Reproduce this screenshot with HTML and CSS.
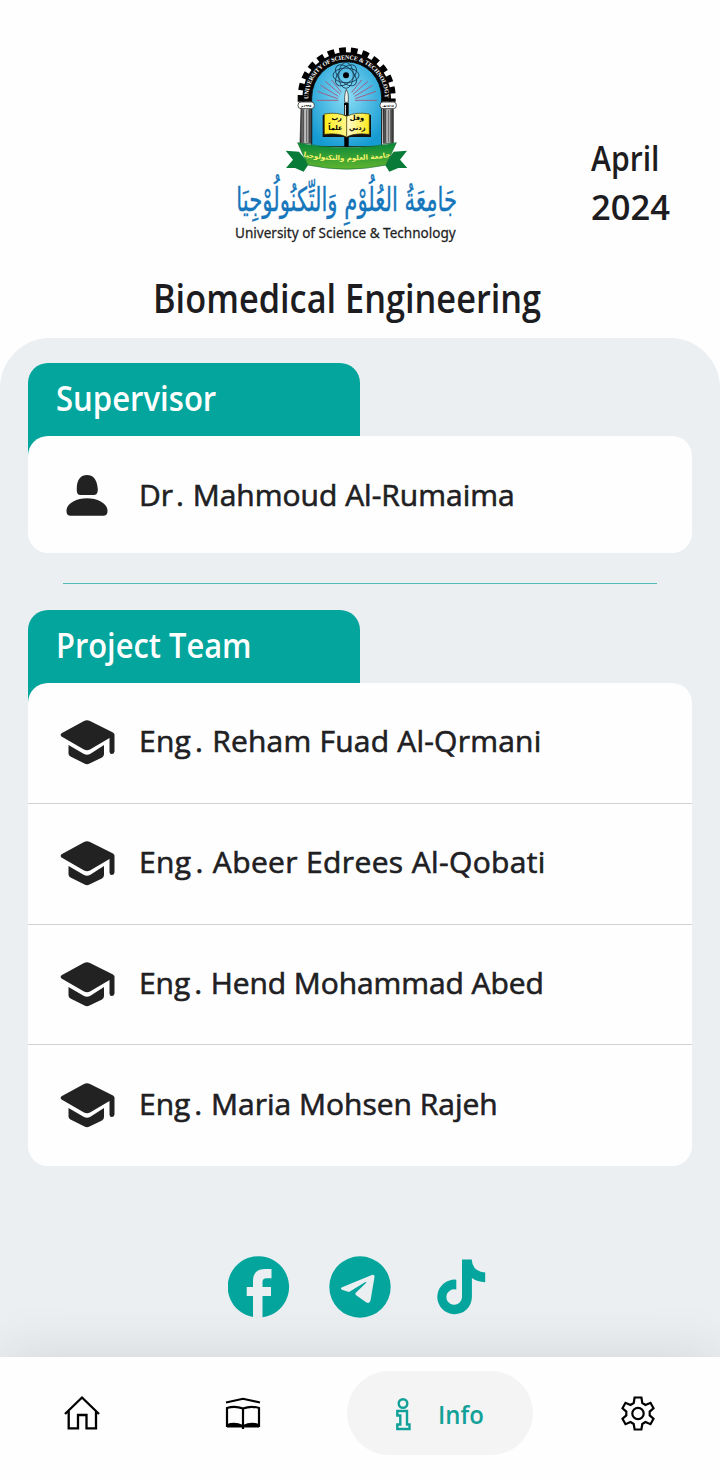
FILE: index.html
```html
<!DOCTYPE html>
<html lang="en">
<head>
<meta charset="utf-8">
<meta name="viewport" content="width=device-width">
<title>Biomedical Engineering</title>
<link rel="stylesheet" href="styles.css">
</head>
<body>
<svg class="defs" aria-hidden="true">
  <symbol id="cap" viewBox="0 0 56 48">
    <path d="M3 16 25 4Q28 2.500 31 4L54 15.500Q56 17 55.500 18V34.500Q55 37 52.800 37T50.500 34.500V21L31 32.500Q28 34 25 32.500L2.500 19.500Q.5 17.500 3 16Z"/>
    <path d="M9.500 28 25 37Q28 38.500 31 37L45 28V37Q45 39 43 40.500L30.500 46.500Q28 47.800 25.500 46.500L11.500 39.500Q9.500 38.500 9.500 36.500Z"/>
  </symbol>
</svg>
<div class="app">
  <header class="header">
    <div class="masthead">
      <svg class="logo" viewBox="0 0 735 645" role="img">
        <defs>
          <radialGradient id="sky" cx=".5" cy=".4" r=".65"><stop offset="0" stop-color="#8cddf6"/><stop offset="1" stop-color="#159bd2"/></radialGradient>
          <linearGradient id="stone"><stop offset="0" stop-color="#222"/><stop offset=".5" stop-color="#ddd"/><stop offset="1" stop-color="#222"/></linearGradient>
          <linearGradient id="gold"><stop offset="0" stop-color="#ffed18"/><stop offset=".49" stop-color="#fff68a"/><stop offset=".51" stop-color="#fffbd0"/><stop offset="1" stop-color="#ffe81a"/></linearGradient>
          <linearGradient id="ribbon" x2="0" y2="1"><stop offset="0" stop-color="#078638"/><stop offset="1" stop-color="#60b52f"/></linearGradient>
          <path id="arch" d="M250 196V188A115 115 0 0 1 480 188V196"/>
          <path id="scroll" d="M215 362Q365 390 517 362"/>
        </defs>
        <path d="M228 200V186A137 139 0 0 1 502 186V200" fill="none" stroke="#000" stroke-width="20" stroke-dasharray="20 14.700"/>
        <path d="M232 200V187A133 135 0 0 1 498 187V200Z" fill="#050505"/>
        <path d="M260 335V188A105 108 0 0 1 470 188V335Z" fill="url(#sky)" stroke="#111" stroke-width="3"/>
        <text class="arch-text"><textPath href="#arch" startOffset="4" textLength="366">UNIVERSITY OF SCIENCE &amp; TECHNOLOGY</textPath></text>
        <g fill="none" stroke="#9b628b" stroke-width="3"><path d="M275 196H340M277 169 338 191M287 151 340 184M301 139 346 178M320 135 349 172M456 196H390M453 169 391 191M443 151 389 184M429 139 384 178M410 135 380 172"/></g>
        <g fill="none" stroke="#12344c" stroke-width="2.500">
          <ellipse cx="363" cy="121" rx="39" ry="22"/><ellipse cx="363" cy="121" rx="39" ry="22" transform="rotate(45 363 121)"/><ellipse cx="363" cy="121" rx="39" ry="22" transform="rotate(90 363 121)"/><ellipse cx="363" cy="121" rx="39" ry="22" transform="rotate(135 363 121)"/>
        </g>
        <circle cx="363" cy="121" r="9"/>
        <path d="M357 204H371V335H358Z"/><path d="M361 210V240" stroke="#fff" stroke-width="3"/>
        <path d="M359 202V185Q360 171 364 163Q371 176 370 186V202Z" fill="#eef6ef" stroke="#222" stroke-width="2"/>
        <path d="M293 240V306H354Q365 310 377 306H438V240" fill="#111"/>
        <path d="M298 237Q337 230 365 244Q393 230 433 237V298Q389 293 365 306Q339 293 298 298Z" fill="url(#gold)" stroke="#3a350b" stroke-width="2"/><path d="M365 244V304" stroke="#6a621e" stroke-width="3"/>
        <g class="motto"><text x="335" y="256">رب</text><text x="331" y="284">علماً</text><text x="396" y="256">وقل</text><text x="397" y="284">زدني</text></g>
        <g fill="url(#stone)" stroke="#222" stroke-width="2"><path d="M228 220H260V325H225Z"/><path d="M474 220H505V325H475Z"/></g>
        <path d="M235 224V322M244 224V322M253 224V322M481 224V322M490 224V322M498 224V322" stroke="#222" stroke-width="2"/>
        <g fill="#fff" stroke="#333" stroke-width="2.500"><rect x="219" y="201" width="49" height="20" rx="9"/><rect x="465" y="201" width="49" height="20" rx="9"/></g>
        <g class="years"><text x="244" y="216">١٩٩٤م</text><text x="490" y="216">١٤١٤هـ</text></g>
        <path d="M182 347 222 350 252 386 236 410 210 399 183 399 204 374ZM546 347 506 350 478 386 493 410 520 399 547 399 525 374Z" fill="#087b38"/>
        <path d="M218 323Q365 352 514 323L483 390Q365 415 248 390Z" fill="url(#ribbon)" stroke="#16733a" stroke-width="2"/>
        <text class="ribbon-text"><textPath href="#scroll" startOffset="50%">جامعة العلوم والتكنولوجيا</textPath></text>
        <text class="calligraphy" transform="translate(365 528) scale(1 1.85)" textLength="662" lengthAdjust="spacingAndGlyphs">جَامِعَةُ العُلُوْمِ وَالتِّكنُولُوْجِيَا</text>
        <text class="uni" x="30" y="609" textLength="662" lengthAdjust="spacingAndGlyphs">University of Science &amp; Technology</text>
      </svg>
      <p class="date"><span class="month">April</span><span class="year">2024</span></p>
    </div>
    <h1 class="title">Biomedical Engineering</h1>
  </header>

  <main class="sheet">
    <section class="group">
      <h2 class="tab"><span class="tab-a">Supervisor</span></h2>
      <div class="card">
        <div class="row single">
          <svg class="ico" viewBox="0 0 56 48"><path d="M17.800 16C18 7 22 3 28 3S38 7 38.800 17C39 21 37.500 23 34.500 23H21.500C18.500 23 17.500 20.500 17.800 16ZM28 26.200C38 26.200 48.500 31 48.500 38.500C48.500 42.500 47 43.800 43.500 43.800H12.500C9 43.800 7.500 42.500 7.500 38.500C7.500 31 18 26.200 28 26.200Z"/></svg>
          <span class="name n0">Dr<span class="dot">.</span> Mahmoud Al-Rumaima</span>
        </div>
      </div>
    </section>
    <div class="divider"></div>
    <section class="group">
      <h2 class="tab"><span class="tab-b">Project Team</span></h2>
      <div class="card">
        <div class="row"><svg class="ico"><use href="#cap"/></svg><span class="name n1">Eng<span class="dot">.</span> Reham Fuad Al-Qrmani</span></div>
        <div class="row"><svg class="ico"><use href="#cap"/></svg><span class="name n2">Eng<span class="dot">.</span> Abeer Edrees Al-Qobati</span></div>
        <div class="row"><svg class="ico"><use href="#cap"/></svg><span class="name n3">Eng<span class="dot">.</span> Hend Mohammad Abed</span></div>
        <div class="row"><svg class="ico"><use href="#cap"/></svg><span class="name n4">Eng<span class="dot">.</span> Maria Mohsen Rajeh</span></div>
      </div>
    </section>
    <div class="social">
      <svg viewBox="0 0 62 62"><path d="M25 61.100A30.700 30.700 0 1 1 34.500 61.300V40H43V31H34.500V26Q34.500 22.300 38.500 22.300H43.500V13H37Q25 13 25 25V31H18.700V40H25Z"/></svg>
      <svg viewBox="0 0 62 62"><path fill-rule="evenodd" d="M31 .3A30.700 30.700 0 1 1 31 61.700A30.700 30.700 0 1 1 31 .3ZM43.500 18.800 13 31.200Q10.500 32.800 13.500 34L20 36 36 26.200Q38.500 25.200 36.500 27.500L26.500 37Q26 38.300 27.500 39.500L37.500 46.500Q40.500 48 41.500 44.500L45.500 21Q45.800 18.500 43.500 18.800Z"/></svg>
      <svg viewBox="1.300 0 62 62"><path d="M32.300 3.400H42Q42.700 15.500 55.500 16.500V26.200Q47.500 26 42.200 22V41A17.300 17.300 0 1 1 26.600 23.700V33.500A7.800 7.800 0 1 0 32.300 41Z"/></svg>
    </div>
  </main>

  <nav class="nav">
    <a class="item"><svg viewBox="0 0 36 36" fill="none" stroke="currentColor" stroke-width="2.300"><path d="M1 19 18 2.500 35 19M4.700 16V33.300H14V20H22.500V33.300H32V16"/></svg></a>
    <a class="item"><svg viewBox="0 0 36 36" fill="none" stroke="currentColor" stroke-width="2.200"><path d="M1 7.500 18 3.800 35 7.500M2 31V13Q10 10.500 18 13.500Q26 10.500 34 13V31ZM18 13V34"/><path d="M2 29Q10 26 18 30Q26 26 34 29V32.500H2Z" fill="currentColor" stroke="none"/></svg></a>
    <a class="item active"><svg viewBox="0 0 36 36" fill="none" stroke="currentColor" stroke-width="2.400"><circle cx="18" cy="6.500" r="4.300"/><path d="M12.300 14H22V27.500H24.500V32H12.300V27.500H15.300V18.500H12.300Z"/></svg><span class="label">Info</span></a>
    <a class="item"><svg viewBox="0 0 36 36" fill="none" stroke="currentColor" stroke-width="2.200"><circle cx="18" cy="18.500" r="5.700"/><path d="M14.600 2.500H21.400L22.300 8L25.500 9.900L30.500 7.800L33.500 13.300L29.700 16.600V20.400L33.500 23.700L30.500 29.200L25.500 27.100L22.300 29L21.400 34.500H14.600L13.700 29L10.500 27.100L5.500 29.200L2.500 23.700L6.300 20.400V16.600L2.500 13.300L5.500 7.800L10.500 9.900L13.700 8Z"/></svg></a>
  </nav>
</div>
</body>
</html>
```
FILE: styles.css
```css
* { box-sizing: border-box; }
body { margin: 0; background: #fefefe; color: #1c1c21; font-family: "Open Sans", "Noto Sans", sans-serif; }
h1, h2, p { margin: 0; }
.defs { width: 0; height: 0; display: block; }
.app { width: 720px; height: 1480px; display: flex; flex-direction: column; overflow: hidden; }
.header { height: 338px; flex: none; padding-top: 35px; }
.masthead { display: flex; padding-left: 225px; height: 236px; }
.logo { width: 245px; height: 215px; flex: none; overflow: visible; }
.date { margin: 98px 0 0 121px; font-size: 35px; line-height: 49px; font-weight: 600; display: flex; flex-direction: column; }
.month, .year, .title, .tab span, .label { white-space: nowrap; transform-origin: 0 50%; width: max-content; }
.month { transform: scaleX(.86); }
.year { transform: scaleX(.985); }
.title { margin-left: 153px; font-size: 39px; line-height: 54px; font-weight: 600; transform: scaleX(.88); }

.arch-text { font: bold 18px "Liberation Serif", serif; fill: #fff; }
.motto { font: bold 20px "DejaVu Sans", sans-serif; text-anchor: middle; }
.years { font: bold 10px "DejaVu Sans", sans-serif; text-anchor: middle; }
.ribbon-text { font: bold 21px "DejaVu Sans", sans-serif; fill: #f5f46e; text-anchor: middle; }
.calligraphy { font: 54px "DejaVu Sans", sans-serif; fill: #1676bb; stroke: #1676bb; stroke-width: .6px; text-anchor: middle; }
.uni { font: 44px "Noto Sans", sans-serif; fill: #222; stroke: #222; stroke-width: .8px; }

.sheet { flex: 1; background: #ebeff2; border-radius: 50px 50px 0 0; padding: 25px 28px 0; }
.tab { width: 332px; height: 96px; margin-bottom: -23px; padding: 10px 28px; border-radius: 20px 20px 0 0; background: #03a59c; color: #fff; font-size: 34px; line-height: 50px; font-weight: 600; }
.tab span { display: block; }
.tab .tab-a { transform: scaleX(.914); }
.tab .tab-b { transform: scaleX(.907); }
.card { position: relative; background: #fefefe; border-radius: 20px; }
.row { height: 120.75px; display: flex; align-items: center; padding: 0 0 3px 31px; border-bottom: 1px solid #cfd1d2; }
.row:last-child { border: 0; }
.row.single { height: 117px; padding-bottom: 0; }
.single .ico { margin-top: 2px; }
.ico { width: 56px; height: 48px; margin-right: 24px; flex: none; fill: #222; }
.name { font-size: 30px; line-height: 42px; white-space: nowrap; color: #202023; -webkit-text-stroke: .6px #202023; }
.dot { padding-left: 4px; margin-right: 1px; }
.n0 .dot { padding-left: 3px; }
.n1 { letter-spacing: .22px; }
.n2 { letter-spacing: .36px; }
.n3 { letter-spacing: -.08px; }
.divider { width: 594px; height: 1px; margin: 30px auto 26px; background: #4ebbb5; }
.social { display: flex; justify-content: center; gap: 39.5px; margin-top: 90px; }
.social svg { width: 62px; height: 62px; fill: #03a59c; }

.nav { position: relative; height: 123px; flex: none; background: #fefefe; box-shadow: 0 0 60px rgba(0, 0, 0, .11); display: flex; align-items: flex-start; padding: 14px 64px 0; color: #000; }
.item { height: 84px; display: flex; align-items: center; }
.item svg { width: 36px; height: 36px; flex: none; }
.item:nth-child(2) { margin-left: 125px; }
.item:last-child { margin-left: 87px; }
.active { width: 186px; margin-left: 86px; padding: 3px 0 0 38px; border-radius: 42px; background: #f4f4f4; color: #12a198; }
.label { margin-left: 17px; margin-top: -2px; font-size: 26px; font-weight: 600; transform: scaleX(.92); }
```
